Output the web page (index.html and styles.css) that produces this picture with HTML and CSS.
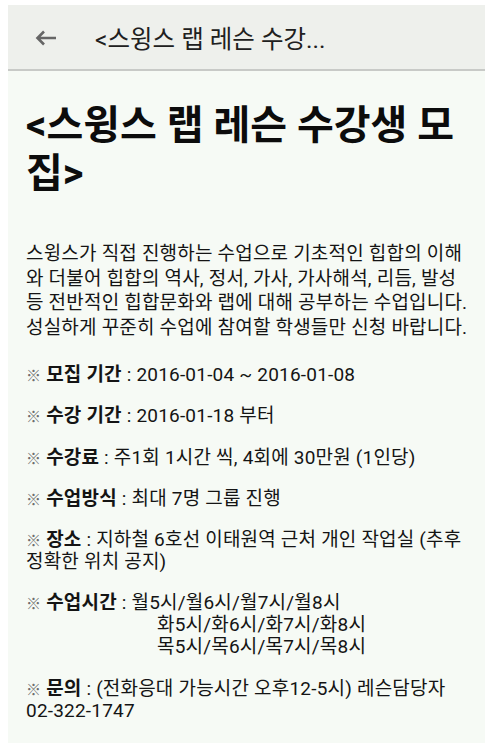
FILE: index.html
```html
<!DOCTYPE html>
<html lang="ko">
<head>
<meta charset="utf-8">
<title>스윙스 랩 레슨</title>
<link rel="stylesheet" href="styles.css">
</head>
<body>
<div class="page">
  <header class="bar">
    <svg class="back" width="22" height="16" viewBox="0 0 22 16" aria-hidden="true">
      <path d="M21 8H2.5M9 1.5L2.5 8L9 14.5" fill="none" stroke="#666666" stroke-width="2.6"/>
    </svg>
    <span class="bar-title">&lt;스윙스 랩 레슨 수강...</span>
  </header>
  <main class="content">
    <h1 class="headline">&lt;스윙스 랩 레슨 수강생 모집&gt;</h1>
    <p class="intro">스윙스가 직접 진행하는 수업으로 기초적인 힙합의 이해와 더불어 힙합의 역사, 정서, 가사, 가사해석, 리듬, 발성 등 전반적인 힙합문화와 랩에 대해 공부하는 수업입니다. 성실하게 꾸준히 수업에 참여할 학생들만 신청 바랍니다.</p>
    <ul class="items">
      <li><span class="mark">※</span> <b>모집 기간</b> : 2016-01-04 ~ 2016-01-08</li>
      <li><span class="mark">※</span> <b>수강 기간</b> : 2016-01-18 부터</li>
      <li><span class="mark">※</span> <b>수강료</b> : 주1회 1시간 씩, 4회에 30만원 (1인당)</li>
      <li><span class="mark">※</span> <b>수업방식</b> : 최대 7명 그룹 진행</li>
      <li><span class="mark">※</span> <b>장소</b> : 지하철 6호선 이태원역 근처 개인 작업실 (추후 정확한 위치 공지)</li>
      <li><span class="mark">※</span> <b>수업시간</b> : 월5시/월6시/월7시/월8시<br><span class="indent">화5시/화6시/화7시/화8시</span><br><span class="indent">목5시/목6시/목7시/목8시</span></li>
      <li><span class="mark">※</span> <b>문의</b> : (전화응대 가능시간 오후12-5시) 레슨담당자 <span class="nowrap">02-322-1747</span></li>
    </ul>
  </main>
</div>
</body>
</html>
```

FILE: styles.css
```css
html, body {
  margin: 0;
  padding: 0;
  background: #ffffff;
}
body {
  font-family: Roboto, "Noto Sans CJK KR", sans-serif;
  color: #141414;
}
.page {
  margin: 5px 15px 0 8px;
  background: #f6faf5;
  min-height: 738px;
}
.bar {
  height: 64px;
  background: #eef0ec;
  border-bottom: 2px solid #c8cac7;
  display: flex;
  align-items: center;
  padding-left: 27px;
}
.back {
  display: block;
  flex: none;
  margin-top: 2px;
}
.bar-title {
  margin-left: 38px;
  font-size: 24.5px;
  color: #202020;
  margin-top: 1px;
}
.content {
  padding: 31px 15px 20px 18px;
}
.headline {
  margin: 0;
  font-size: 40px;
  line-height: 48px;
  font-weight: bold;
  color: #0c0c0c;
}
.intro {
  margin: 44px 0 0;
  font-size: 19px;
  line-height: 24.5px;
  letter-spacing: 0.2px;
}
.items {
  list-style: none;
  margin: 24px 0 0;
  padding: 0;
  font-size: 19px;
  line-height: 22px;
  letter-spacing: 0.2px;
}
.items li {
  margin-bottom: 19.3px;
}
.mark {
  color: #6e6e6e;
  font-size: 15px;
  line-height: 1;
}
.items b {
  font-weight: bold;
}
.indent {
  display: inline-block;
  padding-left: 131px;
  line-height: 1;
}
.nowrap {
  white-space: nowrap;
}
```
